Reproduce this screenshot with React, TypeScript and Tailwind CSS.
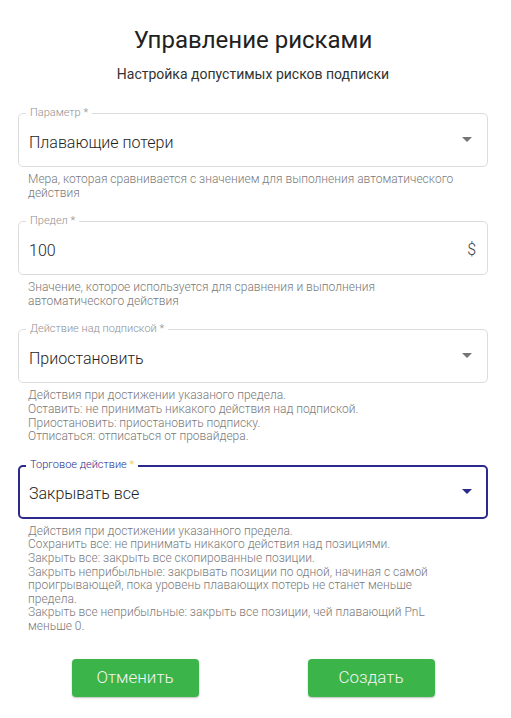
import { ReactNode } from "react";

interface FieldProps {
    label: string;
    value: string;
    focused?: boolean;
    adornment?: ReactNode;
    helper: string[];
}

const Arrow = ({ focused }: { focused?: boolean }) => (
    <svg width="24" height="24" viewBox="0 0 24 24" className={focused ? "fill-[#2b2a8a]" : "fill-[#757575]"}>
        <path d="M7 10l5 5 5-5z" />
    </svg>
);

const Field = ({ label, value, focused, adornment, helper }: FieldProps) => {
    return (
        <div className="flex flex-col">
            <div
                className={
                    focused
                        ? "relative h-[54px] rounded-[5px] border-2 border-[#2b2a8a] flex items-center pl-[9px] pr-[9px]"
                        : "relative h-[54px] rounded-[5px] border border-[#dcdcdc] flex items-center pl-[10px] pr-[10px]"
                }
            >
                <span
                    className={
                        focused
                            ? "absolute left-[6px] top-[-9px] bg-white px-[4px] text-[11px] leading-[14px] font-light text-[#2b2a8a]"
                            : "absolute left-[7px] top-[-8px] bg-white px-[4px] text-[11px] leading-[14px] font-light text-[#8f8f8f]"
                    }
                >
                    {label} <span className={focused ? "text-[#f2c230]" : ""}>*</span>
                </span>
                <span className="flex-1 pt-[5px] text-[16px] font-light text-[#1e1e1e]">{value}</span>
                {adornment}
            </div>
            <div className="mt-[6px] ml-[10px] mr-[30px] text-[12px] leading-[13.6px] font-light text-[#7a7a7a]">
                {helper.map((line) => (
                    <div key={line}>{line}</div>
                ))}
            </div>
        </div>
    );
};

export default function App() {
    return (
        <div className="w-[506px] bg-white px-[18px] pt-[24px] pb-[21px] font-['Roboto',sans-serif]">
            <h1 className="text-center text-[24px] leading-[32px] text-[#212121]">Управление рисками</h1>
            <p className="mt-[8px] text-center text-[14px] leading-[20px] text-[#333333]">
                Настройка допустимых рисков подписки
            </p>
            <div className="mt-[29px] flex flex-col gap-[21px]">
                <Field
                    label="Параметр"
                    value="Плавающие потери"
                    adornment={<div className="mr-[-2px] mb-[2px]"><Arrow /></div>}
                    helper={["Мера, которая сравнивается с значением для выполнения автоматического действия"]}
                />
                <Field
                    label="Предел"
                    value="100"
                    adornment={<span className="pt-[4px] pr-[1px] text-[16px] font-light text-[#444444]">$</span>}
                    helper={["Значение, которое используется для сравнения и выполнения автоматического действия"]}
                />
                <Field
                    label="Действие над подпиской"
                    value="Приостановить"
                    adornment={<div className="mr-[-2px] mb-[2px]"><Arrow /></div>}
                    helper={[
                        "Действия при достижении указаного предела.",
                        "Оставить: не принимать никакого действия над подпиской.",
                        "Приостановить: приостановить подписку.",
                        "Отписаться: отписаться от провайдера.",
                    ]}
                />
                <Field
                    label="Торговое действие"
                    value="Закрывать все"
                    focused
                    adornment={<div className="mr-[-2px] mb-[2px]"><Arrow focused /></div>}
                    helper={[
                        "Действия при достижении указанного предела.",
                        "Сохранить все: не принимать никакого действия над позициями.",
                        "Закрыть все: закрыть все скопированные позиции.",
                        "Закрыть неприбыльные: закрывать позиции по одной, начиная с самой проигрывающей, пока уровень плавающих потерь не станет меньше предела.",
                        "Закрыть все неприбыльные: закрыть все позиции, чей плавающий PnL меньше 0.",
                    ]}
                />
            </div>
            <div className="mt-[25px] flex justify-center gap-[109px]">
                <button className="h-[38px] w-[127px] rounded-[4px] bg-[#3bb54a] text-[17px] font-light text-[#f4f4f4] shadow-[0_1px_2px_rgba(0,0,0,0.25)]">
                    Отменить
                </button>
                <button className="h-[38px] w-[127px] rounded-[4px] bg-[#3bb54a] text-[17px] font-light text-[#f4f4f4] shadow-[0_1px_2px_rgba(0,0,0,0.25)]">
                    Создать
                </button>
            </div>
        </div>
    );
}
